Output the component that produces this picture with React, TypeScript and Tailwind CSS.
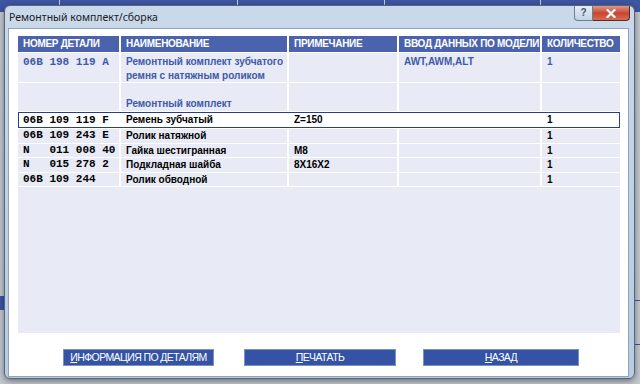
import React from 'react';

type Part = { num: string; name: string; note?: string; qty: string };

const parts: Part[] = [
  { num: '06B 109 243 E', name: 'Ролик натяжной', qty: '1' },
  { num: 'N   011 008 40', name: 'Гайка шестигранная', note: 'M8', qty: '1' },
  { num: 'N   015 278 2', name: 'Подкладная шайба', note: '8X16X2', qty: '1' },
  { num: '06B 109 244', name: 'Ролик обводной', qty: '1' },
];

const cols = 'grid grid-cols-[101px_166px_108px_141px_78px] gap-x-[2px]';
const cell = 'bg-[#e8ebf5] pl-[5px] overflow-hidden whitespace-nowrap';
const mono = "font-['Liberation_Mono',monospace] font-bold text-[11px] whitespace-pre";

const DialogButton: React.FC<{ label: string; className: string }> = ({ label, className }) => (
  <button
    className={`h-[17px] bg-[#3453a4] border border-[#7d90c6] text-white text-[10.5px] tracking-[-0.6px] leading-[15px] whitespace-nowrap ${className}`}
  >
    <span className="underline">{label[0]}</span>
    {label.slice(1)}
  </button>
);

export default function App() {
  return (
    <div className="relative w-[640px] h-[384px] overflow-hidden bg-[#c3c8d0] font-['Liberation_Sans',Arial,sans-serif]">
      {/* application behind the dialog */}
      <div className="flex h-[12px] bg-[#3d55a2]">
        <div className="w-[60px] border-r border-white/70" />
        <div className="w-[178px] border-r border-white/70" />
        <div className="w-[147px] border-r border-white/70" />
        <div className="w-[156px] border-r border-white/70" />
      </div>
      <div className="absolute left-0 top-[296px] w-[4px] h-[14px] bg-[#3d55a2]" />
      <div className="absolute right-0 top-[300px] w-[6px] h-[1px] bg-[#3d55a2]" />
      <div className="absolute right-0 top-[344px] w-[6px] h-[1px] bg-[#3d55a2]" />

      {/* dialog window */}
      <div className="absolute left-[4px] top-[5px] w-[631px] h-[374px] rounded-[6px] border border-[#56657a] bg-gradient-to-b from-[#cad9ea] via-[#bfd1e6] to-[#b7cbe2] shadow-[0_2px_6px_rgba(0,0,0,0.45)] flex flex-col">
        <div className="relative h-[22px] flex items-center pl-[4px] pt-[1px]">
          <span className="text-[10.5px] text-[#1b1b1b] font-['Noto_Sans',sans-serif]">Ремонтный комплект/сборка</span>
          <div className="absolute right-[4px] top-0 flex">
            <div className="w-[19px] h-[15px] border border-[#6d7d93] border-t-0 rounded-bl-[4px] bg-gradient-to-b from-[#e6eef7] to-[#c3d2e4] flex items-center justify-center text-[10px] font-bold text-[#4a5566] leading-none">
              ?
            </div>
            <div className="w-[37px] h-[15px] border border-[#5a2c28] border-t-0 border-l-0 rounded-br-[4px] bg-gradient-to-b from-[#dd9787] via-[#c8452f] to-[#d66b52] flex items-center justify-center">
              <svg width="10" height="9" viewBox="0 0 10 9">
                <path d="M1.5 1 L8.5 8 M8.5 1 L1.5 8" stroke="#fff" strokeWidth="2.2" strokeLinecap="square" />
              </svg>
            </div>
          </div>
        </div>

        <div className="ml-[3px] mr-[5px] h-[349px] border border-[#8fa3bd] bg-white flex flex-col pt-[7px] pl-[9px]">
          <div className="w-[602px] h-[297px] bg-white flex flex-col gap-y-[1px]">
            <div className={`${cols} h-[16px]`}>
              {['НОМЕР ДЕТАЛИ', 'НАИМЕНОВАНИЕ', 'ПРИМЕЧАНИЕ', 'ВВОД ДАННЫХ ПО МОДЕЛИ', 'КОЛИЧЕСТВО'].map((h) => (
                <div key={h} className="bg-[#4b63ad] text-white font-bold text-[10px] tracking-[-0.3px] leading-[16px] pl-[5px] whitespace-nowrap overflow-hidden">
                  {h}
                </div>
              ))}
            </div>

            <div className={`${cols} h-[29px] text-[#4059a9] font-bold text-[10px] leading-[14px]`}>
              <div className={`${cell} ${mono} pt-[2px]`}>06B 198 119 A</div>
              <div className={`${cell} pt-[2px] whitespace-normal`}>
                Ремонтный комплект зубчатого
                <br />
                ремня с натяжным роликом
              </div>
              <div className={cell} />
              <div className={`${cell} pt-[2px]`}>AWT,AWM,ALT</div>
              <div className={`${cell} pt-[2px]`}>1</div>
            </div>

            <div className={`${cols} h-[28px] text-[#4059a9] font-bold text-[10px] leading-[14px]`}>
              <div className={cell} />
              <div className={`${cell} flex items-end`}>Ремонтный комплект</div>
              <div className={cell} />
              <div className={cell} />
              <div className={cell} />
            </div>

            <div className="h-[16px] bg-white border border-[#2a3f86]">
              <div className={`${cols} -ml-[1px] text-black font-bold text-[10px] leading-[14px]`}>
                <div className={`pl-[5px] ${mono}`}>06B 109 119 F</div>
                <div className="pl-[5px]">Ремень зубчатый</div>
                <div className="pl-[5px]">Z=150</div>
                <div />
                <div className="pl-[5px]">1</div>
              </div>
            </div>

            {parts.map((p) => (
              <div key={p.num} className={`${cols} h-[13.5px] text-black font-bold text-[10px] leading-[13.5px]`}>
                <div className={`${cell} ${mono}`}>{p.num}</div>
                <div className={cell}>{p.name}</div>
                <div className={cell}>{p.note}</div>
                <div className={cell} />
                <div className={cell}>{p.qty}</div>
              </div>
            ))}

            <div className="flex-1 bg-[#e8ebf5]" />
          </div>

          <div className="flex mt-[16px]">
            <DialogButton label="ИНФОРМАЦИЯ ПО ДЕТАЛЯМ" className="ml-[45px] w-[151px]" />
            <DialogButton label="ПЕЧАТАТЬ" className="ml-[30px] w-[152px]" />
            <DialogButton label="НАЗАД" className="ml-[27px] w-[156px]" />
          </div>
        </div>
      </div>
    </div>
  );
}
